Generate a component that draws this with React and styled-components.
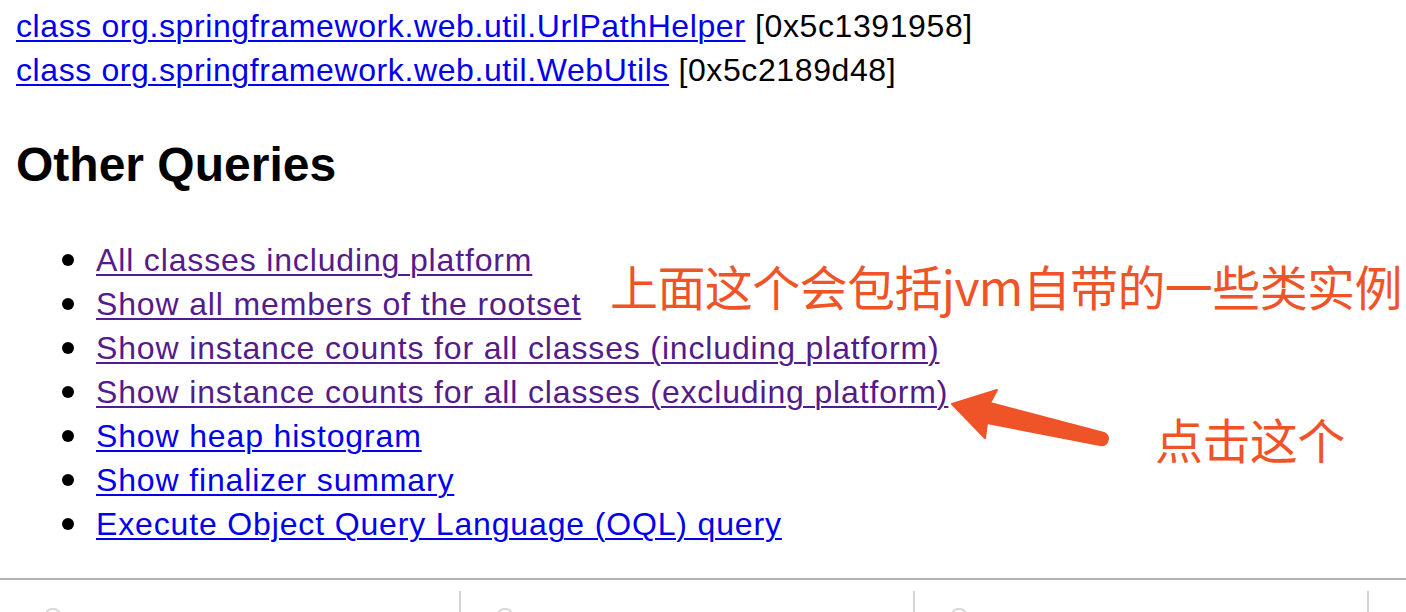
import React from 'react';
import styled, { createGlobalStyle } from 'styled-components';

/*
* heap 分析页面的 "Other Queries" 部分，加上截图里的标注
 */
const classLines = [
  { name: 'class org.springframework.web.util.TagUtils', addr: '[0x5c1390a10]' },
  { name: 'class org.springframework.web.util.UrlPathHelper', addr: '[0x5c1391958]' },
  { name: 'class org.springframework.web.util.WebUtils', addr: '[0x5c2189d48]' },
];

const queries = [
  { text: 'All classes including platform', visited: true },
  { text: 'Show all members of the rootset', visited: true },
  { text: 'Show instance counts for all classes (including platform)', visited: true },
  { text: 'Show instance counts for all classes (excluding platform)', visited: true },
  { text: 'Show heap histogram', visited: false },
  { text: 'Show finalizer summary', visited: false },
  { text: 'Execute Object Query Language (OQL) query', visited: false },
];

const App = () => {
  return (
    <>
      <GlobalStyle />
      <StyledPage>
        <ClassList>
          {classLines.map((line) => (
            <ClassLine key={line.addr}>
              <StyledLink href={'#'}>{line.name}</StyledLink> {line.addr}
            </ClassLine>
          ))}
        </ClassList>

        <Heading>Other Queries</Heading>

        <QueryList>
          {queries.map((q) => (
            <QueryItem key={q.text}>
              <StyledLink href={'#'} $visited={q.visited}>{q.text}</StyledLink>
            </QueryItem>
          ))}
        </QueryList>

        <Rule />

        <CellRow>
          {[0, 1, 2].map((i) => (
            <Cell key={i}>
              <CellIcon />
            </Cell>
          ))}
        </CellRow>

        <Note $left={610} $top={259}>上面这个会包括jvm自带的一些类实例</Note>
        <Note $left={1155} $top={412}>点击这个</Note>
        <Arrow width={180} height={75} viewBox={'0 0 180 75'}>
          <path
            d={'M12 24 L57 10 L50 23 L164 53 Q170 56 167 62 Q165 66 160 65 L47 43 L45 58 Z'}
            fill={'#ef5328'}
            stroke={'#ef5328'}
            strokeWidth={2}
            strokeLinejoin={'round'}
          />
        </Arrow>
      </StyledPage>
    </>
  );
};

/*
* styled-components 코드
 */
const GlobalStyle = createGlobalStyle`
  html, body {
    margin: 0;
    padding: 0;
    overflow: hidden;
    background: #ffffff;
  }

  body {
    font-family: "Liberation Sans", Arial, "Noto Sans CJK SC", sans-serif;
    font-size: 32px;
    color: #000000;
  }
`;

const StyledPage = styled.div`
  position: relative;
  padding: 0 16px;
  margin-top: -40px;
  letter-spacing: 0.6px;
`;

const ClassList = styled.div`
  line-height: 44px;
`;

const ClassLine = styled.div`
  white-space: nowrap;
`;

const StyledLink = styled.a`
  color: ${(props) => (props.$visited ? '#551a8b' : '#0000ee')};
  text-decoration: underline;
  text-decoration-thickness: 2px;
  text-underline-offset: 3px;
`;

const Heading = styled.h2`
  font-size: 48px;
  font-weight: 700;
  line-height: 66px;
  letter-spacing: 0;
  margin: 40px 0;
`;

const QueryList = styled.ul`
  margin: 40px 0 32px;
  padding-left: 80px;
  line-height: 44px;
  list-style: none;
  letter-spacing: 0.85px;
`;

const QueryItem = styled.li`
  position: relative;
  white-space: nowrap;

  &::before {
    content: '';
    position: absolute;
    left: -34px;
    top: 16px;
    width: 12px;
    height: 12px;
    border-radius: 50%;
    background: #000000;
  }
`;

const Rule = styled.hr`
  margin: 0 -16px 11px;
  border: none;
  border-top: 2px solid #b4b4b4;
`;

const CellRow = styled.div`
  display: grid;
  grid-template-columns: 445px 454px 454px;
  height: 40px;
`;

const Cell = styled.div`
  border-right: 2px solid #d4d4d4;
  padding: 17px 0 0 36px;

  &:first-child {
    padding-left: 29px;
  }
`;

const CellIcon = styled.div`
  width: 12px;
  height: 24px;
  border: 2px solid #d8d8d8;
  border-radius: 7px 7px 0 0;
`;

const Note = styled.div`
  position: absolute;
  left: ${(props) => props.$left}px;
  top: ${(props) => props.$top + 40}px;
  font-family: "Noto Sans CJK SC", sans-serif;
  font-size: 48px;
  line-height: 52px;
  letter-spacing: -0.6px;
  color: #ef5328;
  white-space: nowrap;
`;

const Arrow = styled.svg`
  position: absolute;
  left: 940px;
  top: 420px;
`;

export default App;
